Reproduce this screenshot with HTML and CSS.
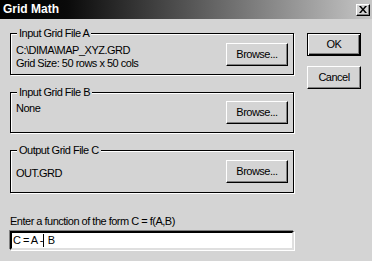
FILE: index.html
```html
<!DOCTYPE html>
<html lang="en">
<head>
    <meta charset="UTF-8">
    <title>Grid Math</title>
    <link rel="stylesheet" href="styles.css">
</head>
<body>
    <!-- 对话框 -->
    <div class="dialog">
        <!-- 标题栏 -->
        <div class="titlebar">
            <span class="title">Grid Math</span>
            <span class="close-btn">
                <svg width="8" height="7" viewBox="0 0 8 7">
                    <path d="M0 0h2l2 2.5L6 0h2L5 3.5 8 7H6L4 4.5 2 7H0l3-3.5z" fill="#000"/>
                </svg>
            </span>
        </div>

        <div class="content">
            <!-- 左边的分组 -->
            <div class="main">
                <div class="group group-a">
                    <span class="legend">Input Grid File A</span>
                    <div class="group-text">C:\DIMA\MAP_XYZ.GRD<br>Grid Size: 50 rows x 50 cols</div>
                    <button class="btn btn-browse">Browse...</button>
                </div>

                <div class="group group-b">
                    <span class="legend">Input Grid File B</span>
                    <div class="group-text">None</div>
                    <button class="btn btn-browse">Browse...</button>
                </div>

                <div class="group group-c">
                    <span class="legend">Output Grid File C</span>
                    <div class="group-text">OUT.GRD</div>
                    <button class="btn btn-browse">Browse...</button>
                </div>

                <div class="func-label">Enter a function of the form C = f(A,B)</div>
                <div class="func-input">C = A -<span class="caret"></span>B</div>
            </div>

            <!-- 右边的按钮 -->
            <div class="side">
                <button class="btn btn-default">OK</button>
                <button class="btn">Cancel</button>
            </div>
        </div>
    </div>
</body>
</html>
```

FILE: styles.css
```css
*{
    margin: 0;
    padding: 0;
    box-sizing: border-box;
}

body{
    background-color: #d4d4d4;
    font-family: "Liberation Sans", Arial, sans-serif;
    font-size: 11px;
    line-height: 13px;
    letter-spacing: -0.5px;
    color: #000;
}

/* 对话框 */
.dialog{
    width: 372px;
    height: 261px;
    background-color: #d4d4d4;
}

/* 标题栏 */
.titlebar{
    height: 19px;
    display: flex;
    align-items: center;
    justify-content: space-between;
    padding: 0 2px 0 3px;
    background: linear-gradient(90deg, #000 0%, #0a0a0a 18%, #c6c6c6 100%);
}

.title{
    color: #fff;
    font-weight: bold;
    font-size: 12px;
    letter-spacing: 0;
}

/* 关闭按钮 */
.close-btn{
    width: 14px;
    height: 12px;
    display: flex;
    align-items: center;
    justify-content: center;
    background-color: #d4d4d4;
    border: 1px solid;
    border-color: #fff #000 #000 #fff;
    box-shadow: inset -1px -1px 0 #808080;
}

.content{
    display: flex;
    gap: 13px;
    padding: 14px 0 0 10px;
}

.main{
    width: 284px;
    display: flex;
    flex-direction: column;
}

/* 分组框 */
.group{
    position: relative;
    display: flex;
    justify-content: space-between;
    align-items: center;
    padding: 0 5px;
    border: 1px solid #000;
    box-shadow: inset 1px 1px 0 #fff, 1px 1px 0 #fff;
}

.group-a{
    height: 42px;
}

.group-b{
    height: 41px;
    margin-top: 17px;
}

.group-c{
    height: 43px;
    margin-top: 17px;
}

/* 分组标题 */
.legend{
    position: absolute;
    top: -7px;
    left: 6px;
    padding: 0 2px;
    background-color: #d4d4d4;
}

.group-text{
    align-self: flex-start;
}

.group-a .group-text{
    margin-top: 10px;
}

.group-b .group-text{
    margin-top: 9px;
}

.group-c .group-text{
    margin-top: 16px;
}

/* 按钮 */
.btn{
    font: inherit;
    letter-spacing: inherit;
    color: #000;
    background-color: #d4d4d4;
    border: 1px solid;
    border-color: #fff #000 #000 #fff;
    box-shadow: inset -1px -1px 0 #808080;
}

.btn-browse{
    width: 62px;
    height: 23px;
}

.side{
    display: flex;
    flex-direction: column;
    gap: 10px;
}

.side .btn{
    width: 54px;
    height: 23px;
}

/* 默认按钮多一圈黑框 */
.side .btn-default{
    border-color: #000;
    box-shadow: inset 1px 1px 0 #fff, inset -1px -1px 0 #000, inset -2px -2px 0 #808080;
}

.func-label{
    margin-top: 22px;
}

/* 输入框 */
.func-input{
    height: 19px;
    margin-top: 3px;
    padding: 1px 1px;
    background-color: #fff;
    border: 2px solid;
    border-color: #000 #dfdfdf #dfdfdf #000;
    box-shadow: -1px -1px 0 #808080, 1px 1px 0 #fff;
    display: flex;
    align-items: center;
    white-space: pre;
}

/* 光标 */
.caret{
    width: 1px;
    height: 13px;
    margin: 0 4px 0 0;
    background-color: #000;
}
```
